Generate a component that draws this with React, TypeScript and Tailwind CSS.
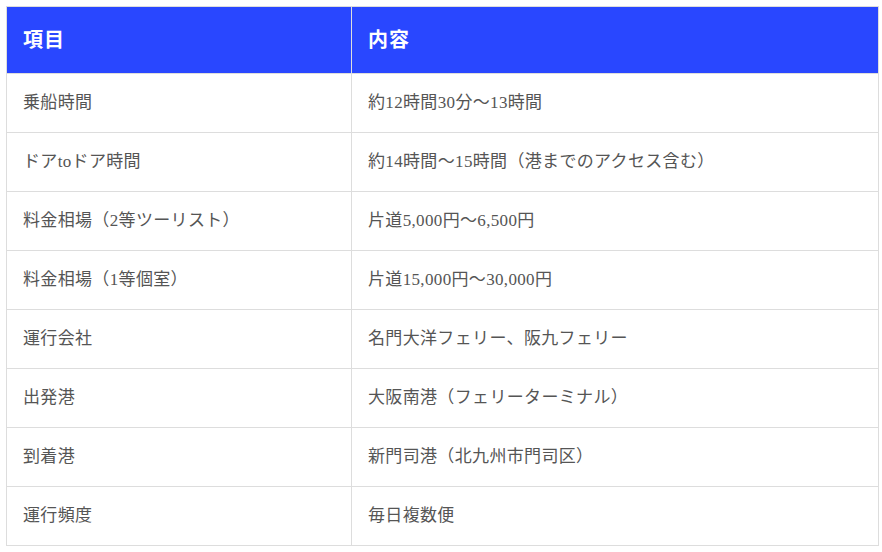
const rows: [string, string][] = [
  ["乗船時間", "約12時間30分〜13時間"],
  ["ドアtoドア時間", "約14時間〜15時間（港までのアクセス含む）"],
  ["料金相場（2等ツーリスト）", "片道5,000円〜6,500円"],
  ["料金相場（1等個室）", "片道15,000円〜30,000円"],
  ["運行会社", "名門大洋フェリー、阪九フェリー"],
  ["出発港", "大阪南港（フェリーターミナル）"],
  ["到着港", "新門司港（北九州市門司区）"],
  ["運行頻度", "毎日複数便"],
];

export default function App() {
  return (
    <div
      className="w-[882px] h-[552px] bg-white pt-[6px] pl-[6px]"
      style={{ fontFamily: '"Liberation Serif", "Noto Sans CJK JP", serif' }}
    >
      <table className="w-[873px] border-collapse border border-[#dddddd] table-fixed">
        <thead>
          <tr className="bg-[#2947ff] text-white">
            <th className="w-[345px] h-[67px] border border-[#dddddd] px-4 text-left text-[20px] font-bold tracking-[0.05em]">
              項目
            </th>
            <th className="h-[67px] border border-[#dddddd] px-4 text-left text-[20px] font-bold tracking-[0.05em]">
              内容
            </th>
          </tr>
        </thead>
        <tbody>
          {rows.map(([k, v]) => (
            <tr key={k} className="text-[#555555]">
              <td className="h-[59px] border border-[#dddddd] px-4 text-[17px] tracking-[0.02em]">{k}</td>
              <td className="h-[59px] border border-[#dddddd] px-4 text-[17px] tracking-[0.02em]">{v}</td>
            </tr>
          ))}
        </tbody>
      </table>
    </div>
  );
}
